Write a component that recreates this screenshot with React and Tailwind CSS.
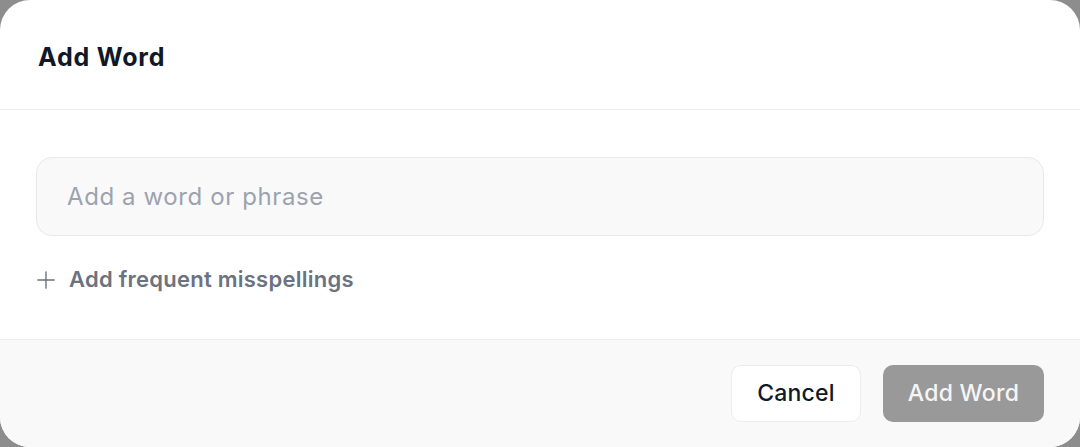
import { Plus } from "lucide-react";

export default function App() {
  return (
    <div className="w-full h-[447px] bg-[#8d8d8d]" style={{ fontFamily: "Inter, 'Noto Sans', sans-serif" }}>
      <div className="h-full bg-white rounded-[30px] overflow-hidden flex flex-col">
        <div className="h-[110px] px-[38px] flex items-center border-b border-[#ececec]">
          <h1 className="text-[25px] font-bold text-[#111827] tracking-[0.8px] pt-[7px]">Add Word</h1>
        </div>
        <div className="flex-1 px-[36px] pt-[47px]">
          <div className="h-[79px] rounded-[16px] border border-[#e8e8e8] bg-[#f9f9f9] flex items-center px-[30px]">
            <input
              className="w-full bg-transparent outline-none text-[24px] tracking-[0.6px] text-[#111827] placeholder:text-[#9ca3af]"
              placeholder="Add a word or phrase"
            />
          </div>
          <button className="mt-[27px] flex items-center gap-[9px] -ml-[4px] text-[#6b7280]">
            <Plus size={28} strokeWidth={1.2} />
            <span className="text-[22px] font-semibold tracking-[0.25px]">Add frequent misspellings</span>
          </button>
        </div>
        <div className="h-[108px] bg-[#f9f9f9] border-t border-[#ececec] flex items-center justify-end gap-[22px] pr-[36px]">
          <button className="h-[57px] w-[130px] rounded-[10px] bg-white border border-[#ececec] text-[23px] tracking-[0.2px] font-medium text-[#111827]">
            Cancel
          </button>
          <button className="h-[57px] w-[161px] rounded-[10px] bg-[#999999] text-[23px] tracking-[0.3px] font-medium text-[#f5f5f5]">
            Add Word
          </button>
        </div>
      </div>
    </div>
  );
}
